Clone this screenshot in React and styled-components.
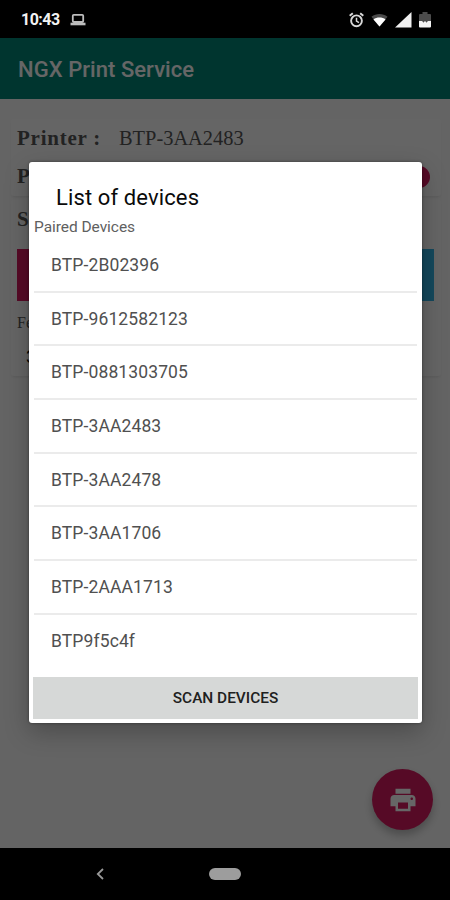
import styled, { createGlobalStyle } from "styled-components";

const GlobalStyle = createGlobalStyle`
  * {
    box-sizing: border-box;
  }
  body {
    margin: 0;
    background: #000;
    font-family: Roboto, "Liberation Sans", sans-serif;
  }
`;

const Phone = styled.div`
  width: 450px;
  height: 900px;
  display: flex;
  flex-direction: column;
  background: #000;
  overflow: hidden;
`;

const StatusBar = styled.header`
  height: 38px;
  flex: none;
  display: flex;
  align-items: center;
  padding: 1px 19px 0 21px;
  color: #f2f2f2;
`;

const Clock = styled.span`
  width: 49px;
  font-size: 16px;
  font-weight: 700;
  letter-spacing: -0.5px;
`;

const StatusIcons = styled.div`
  margin-left: auto;
  display: flex;
  align-items: center;
  gap: 7px;
`;

const Window = styled.main`
  position: relative;
  height: 810px;
  flex: none;
  display: flex;
  flex-direction: column;
  background: #fafafa;
`;

const Toolbar = styled.div`
  height: 61px;
  flex: none;
  display: flex;
  align-items: center;
  padding: 2px 18px 0;
  background: #008577;
`;

const Title = styled.h1`
  margin: 0;
  color: #fff;
  font-size: 22px;
  font-weight: 500;
  letter-spacing: 0.05px;
`;

const Content = styled.div`
  display: flex;
  flex-direction: column;
  gap: 4px;
  padding: 20px 9px 0 11px;
`;

const Card = styled.section`
  height: ${(props) => props.$height}px;
  padding: 0 7px 0 6px;
  background: #fdfdfd;
  border-radius: 3px;
  box-shadow: 0 2px 3px -1px rgba(0, 0, 0, 0.1);
`;

const Line = styled.div`
  height: 38px;
  display: flex;
  align-items: center;
  font-family: "Liberation Serif", serif;
  font-size: 20.4px;
  color: #555;
`;

const Label = styled.b`
  width: 102px;
  font-size: 21px;
  letter-spacing: 0.75px;
`;

const Thumb = styled.span`
  width: 22px;
  height: 22px;
  margin: 2px 4px 0 auto;
  border-radius: 50%;
  background: #d81b60;
`;

const ColorButtons = styled.div`
  height: 52px;
  margin-top: 11px;
  display: flex;
  justify-content: space-between;
`;

const ColorButton = styled.span`
  width: 130px;
  background: ${(props) => props.$color};
`;

const Caption = styled.div`
  margin-top: 12px;
  font: 400 16px/20px "Liberation Serif", serif;
  color: #555;
`;

const Value = styled.div`
  padding: 14px 0 0 9px;
  font-size: 18px;
  line-height: 20px;
  color: #000;
`;

const Fab = styled.div`
  position: absolute;
  right: 17px;
  bottom: 18px;
  width: 61px;
  height: 61px;
  display: grid;
  place-items: center;
  border-radius: 50%;
  background: #d81b60;
  box-shadow: 0 5px 8px rgba(0, 0, 0, 0.25);
`;

const Scrim = styled.div`
  position: absolute;
  inset: 0;
  display: flex;
  justify-content: center;
  align-items: flex-start;
  padding: 124px 0 0 1px;
  background: rgba(0, 0, 0, 0.6);
`;

const Dialog = styled.div`
  width: 393px;
  height: 561px;
  display: flex;
  flex-direction: column;
  padding: 0 4px 4px;
  border-radius: 3px;
  background: #fff;
  box-shadow: 0 9px 24px rgba(0, 0, 0, 0.25), 0 0 3px rgba(0, 0, 0, 0.4);
`;

const DialogTitle = styled.h2`
  margin: 0;
  padding: 22px 0 0 23px;
  font-size: 22px;
  line-height: 28px;
  font-weight: 400;
  letter-spacing: 0.12px;
  color: #0a0a0a;
`;

const SubTitle = styled.div`
  height: 27px;
  padding: 5px 0 0 1px;
  font-size: 15.5px;
  line-height: 20px;
  letter-spacing: -0.05px;
  color: #606060;
`;

const DeviceList = styled.ul`
  flex: 1;
  margin: 0;
  padding: 0;
  list-style: none;
`;

const Device = styled.li`
  height: 53.7px;
  display: flex;
  align-items: center;
  margin: 0 1px;
  padding-left: 17px;
  border-bottom: 2px solid #ebebeb;
  font-size: 17.5px;
  letter-spacing: 0.12px;
  color: #505050;
  &:last-child {
    border-bottom-color: transparent;
  }
`;

const ScanButton = styled.button`
  height: 42px;
  flex: none;
  padding: 0;
  border: 0;
  background: #d6d8d7;
  font: 500 15.4px Roboto, sans-serif;
  color: #202020;
`;

const NavBar = styled.nav`
  flex: 1;
  display: grid;
  grid-template-columns: 200px 50px 200px;
  place-items: center;
`;

const HomePill = styled.span`
  width: 32px;
  height: 12px;
  border-radius: 6px;
  background: #9d9d9d;
`;

const devices = [
  "BTP-2B02396",
  "BTP-9612582123",
  "BTP-0881303705",
  "BTP-3AA2483",
  "BTP-3AA2478",
  "BTP-3AA1706",
  "BTP-2AAA1713",
  "BTP9f5c4f",
];

function LaptopIcon() {
  return (
    <svg width="16" height="13" viewBox="0 0 16 13" fill="none" stroke="#bdbdbd">
      <rect x="2.8" y="1.8" width="10.4" height="7.2" rx="1" strokeWidth="1.8" />
      <path d="M0.5 11h15" strokeWidth="2.6" />
    </svg>
  );
}

function AlarmIcon() {
  return (
    <svg width="15" height="16" viewBox="0.5 0 15 16" fill="none" stroke="#d8d8d8">
      <circle cx="8" cy="8.8" r="5.4" strokeWidth="1.9" />
      <path d="M1.2 3.7 4.3 1.2M14.8 3.7l-3.1-2.5" strokeWidth="2" />
      <path d="M8 5.7v3.4l2.5 1.5" strokeWidth="1.5" />
    </svg>
  );
}

function WifiIcon() {
  return (
    <svg width="17" height="14" viewBox="0 0 18 14">
      <path d="M0.5 3.6C5.5-.3 12.5-.3 17.5 3.6L9 14z" fill="#4a4a4a" />
      <path d="M2.6 6.4c3.4-2.6 9.4-2.6 12.8 0L9 14z" fill="#fff" />
    </svg>
  );
}

function SignalIcon() {
  return (
    <svg width="17" height="16" viewBox="0 0 17 16">
      <path d="M0 15.5 16.5 0v15.5z" fill="#f0f0f0" />
    </svg>
  );
}

function BatteryIcon() {
  return (
    <svg width="12" height="16" viewBox="0 0 12 16">
      <path d="M3.5 0h5v2H11q1 0 1 1v7H0V3q0-1 1-1h2.5z" fill="#4c4c4c" />
      <path d="M0 9h3l1.5 1.5L6 9l1.5 1.500L9 9h3v5.5q0 1-1 1H1q-1 0-1-1z" fill="#f4f4f4" />
    </svg>
  );
}

function PrinterIcon() {
  return (
    <svg width="30" height="30" viewBox="0 0 24 24" fill="#fff">
      <path d="M19 8H5c-1.66 0-3 1.34-3 3v6h4v4h12v-4h4v-6c0-1.66-1.34-3-3-3zm-3 11H8v-5h8v5zm3-7c-.55 0-1-.45-1-1s.45-1 1-1 1 .45 1 1-.45 1-1 1zm-1-9H6v4h12V3z" />
    </svg>
  );
}

function BackIcon() {
  return (
    <svg width="8" height="12" viewBox="0 0 8 12" fill="none" stroke="#999" strokeWidth="1.8">
      <path d="M7 1 1.8 6 7 11" />
    </svg>
  );
}

export default function App() {
  return (
    <Phone>
      <GlobalStyle />
      <StatusBar>
        <Clock>10:43</Clock>
        <LaptopIcon />
        <StatusIcons>
          <AlarmIcon />
          <WifiIcon />
          <SignalIcon />
          <BatteryIcon />
        </StatusIcons>
      </StatusBar>
      <Window>
        <Toolbar>
          <Title>NGX Print Service</Title>
        </Toolbar>
        <Content>
          <Card $height={77}>
            <Line>
              <Label>Printer :</Label>
              <span>BTP-3AA2483</span>
            </Line>
            <Line>
              <Label>P</Label>
              <Thumb />
            </Line>
          </Card>
          <Card $height={176}>
            <Line>
              <Label>S</Label>
            </Line>
            <ColorButtons>
              <ColorButton $color="#d81b60" />
              <ColorButton $color="#33b5e5" />
            </ColorButtons>
            <Caption>Fe</Caption>
            <Value>3</Value>
          </Card>
        </Content>
        <Fab>
          <PrinterIcon />
        </Fab>
        <Scrim>
          <Dialog>
            <DialogTitle>List of devices</DialogTitle>
            <SubTitle>Paired Devices</SubTitle>
            <DeviceList>
              {devices.map((name) => (
                <Device key={name}>{name}</Device>
              ))}
            </DeviceList>
            <ScanButton>SCAN DEVICES</ScanButton>
          </Dialog>
        </Scrim>
      </Window>
      <NavBar>
        <BackIcon />
        <HomePill />
      </NavBar>
    </Phone>
  );
}
